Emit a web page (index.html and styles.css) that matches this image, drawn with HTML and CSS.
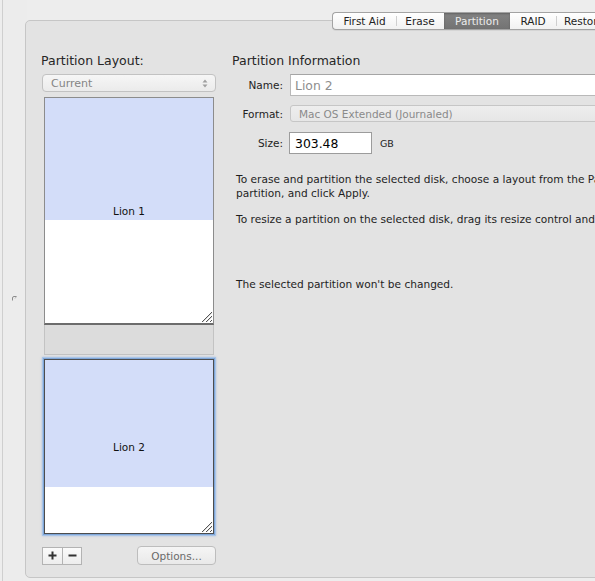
FILE: index.html
```html
<!DOCTYPE html>
<html>
<head>
<meta charset="utf-8">
<title>Disk Utility – Partition</title>
<link rel="stylesheet" href="styles.css">
</head>
<body>
<div class="window">
  <div class="edge">
    <svg class="collapse" width="5" height="5" viewBox="0 0 5 5"><path d="M0.5 4.5 L0.5 2 Q0.5 0.5 2 0.5 L4.5 0.5" fill="none" stroke="#8c8c8c" stroke-width="1"/><path d="M3 2.5 L4.5 0.5" stroke="#aaa" stroke-width="0.8"/></svg>
  </div>
  <div class="panel">
    <div class="tabs">
      <span class="tab t-first">First Aid</span><span class="tab t-erase">Erase</span><span class="tab t-part sel">Partition</span><span class="tab t-raid">RAID</span><span class="tab t-rest">Restore</span>
    </div>

    <div class="layout-col">
      <div class="heading">Partition Layout:</div>
      <div class="popup">
        <span>Current</span>
        <svg width="6" height="9" viewBox="0 0 6 9"><path d="M3 0.5 L5.5 3.5 L0.5 3.5 Z M3 8.5 L5.5 5.5 L0.5 5.5 Z" fill="#a0a0a0"/></svg>
      </div>
      <div class="parts">
        <div class="part p1">
          <div class="used" style="height:122px"></div>
          <span class="plabel">Lion 1</span>
          <svg class="grip" width="11" height="11" viewBox="0 0 11 11"><path d="M1 11 L11 1 M5 11 L11 5 M9 11 L11 9" stroke="#555" stroke-width="1"/><path d="M2 11 L11 2 M6 11 L11 6" stroke="#ddd" stroke-width="1"/></svg>
        </div>
        <div class="gap"></div>
        <div class="part p2 selected">
          <div class="used" style="height:127px"></div>
          <span class="plabel">Lion 2</span>
          <svg class="grip" width="11" height="11" viewBox="0 0 11 11"><path d="M1 11 L11 1 M5 11 L11 5 M9 11 L11 9" stroke="#555" stroke-width="1"/><path d="M2 11 L11 2 M6 11 L11 6" stroke="#ddd" stroke-width="1"/></svg>
        </div>
      </div>
      <div class="bottom-row">
        <div class="pm">
          <span class="pm-btn"><svg width="9" height="9" viewBox="0 0 9 9"><path d="M4.5 0.5 V8.5 M0.5 4.5 H8.5" stroke="#333" stroke-width="2"/></svg></span><span class="pm-btn"><svg width="9" height="9" viewBox="0 0 9 9"><path d="M0.5 4.5 H8.5" stroke="#333" stroke-width="2"/></svg></span>
        </div>
        <div class="options">Options...</div>
      </div>
    </div>

    <div class="info-col">
      <div class="heading info-heading">Partition Information</div>
      <div class="form">
        <div class="row row-name">
          <span class="lbl">Name:</span>
          <div class="field name-field">Lion 2</div>
        </div>
        <div class="row row-format">
          <span class="lbl">Format:</span>
          <div class="format-popup">Mac OS Extended (Journaled)</div>
        </div>
        <div class="row row-size">
          <span class="lbl">Size:</span>
          <div class="field size-field">303.48</div>
          <span class="unit">GB</span>
        </div>
      </div>
      <div class="desc">
        <p>To erase and partition the selected disk, choose a layout from the Partition Layout pop-up menu, set options for each<br>partition, and click Apply.</p>
        <p>To resize a partition on the selected disk, drag its resize control and click Apply.</p>
        <p class="status">The selected partition won't be changed.</p>
      </div>
    </div>
  </div>
</div>
</body>
</html>
```

FILE: styles.css
```css
* { box-sizing: border-box; }
html, body { margin: 0; padding: 0; }
body {
  background: #ededed;
  font-family: "DejaVu Sans", "Liberation Sans", sans-serif;
  color: #1a1a1a;
}
.window {
  width: 595px;
  height: 581px;
  overflow: hidden;
  display: flex;
  background: #ededed;
}
.edge {
  flex: 0 0 25px;
  height: 581px;
  margin-left: 2px;
  border-left: 1px solid #cfcfcf;
  background: #ececec;
  padding-top: 296px;
  padding-left: 9px;
}
.collapse { display: block; }

.panel {
  position: relative;
  flex: 0 0 auto;
  width: 640px;
  height: 558px;
  margin-top: 20px;
  margin-left: -2px;
  background: #e3e3e3;
  border: 1px solid #c6c6c6;
  border-radius: 5px;
  padding: 31px 0 0 15px;
  display: flex;
}

/* tab strip overlaps the panel's top border */
.tabs {
  position: absolute;
  top: -9px;
  left: 306px;
  display: flex;
  height: 18px;
  border: 1px solid #a3a3a3;
  border-right: none;
  border-radius: 4px 0 0 4px;
  background: linear-gradient(#ffffff, #f1f1f1);
  overflow: hidden;
  box-shadow: 0 1px 0 rgba(0,0,0,0.06);
}
.tab {
  display: flex;
  align-items: center;
  justify-content: center;
  font-size: 10.5px;
  color: #222;
  position: relative;
  height: 16px;
}
.tab + .tab::before {
  content: "";
  position: absolute;
  left: 0;
  top: 3px;
  height: 10px;
  width: 1px;
  background: #cfcfcf;
}
.tab.sel + .tab::before, .tab.sel::before { display: none; }
.t-first { width: 63px; }
.t-erase { width: 48px; }
.t-part { width: 66px; }
.t-raid { width: 46px; }
.t-rest { width: 60px; justify-content: flex-start; padding-left: 8px; }
.tab.sel {
  background: linear-gradient(#838383, #737373);
  color: #ececec;
  box-shadow: inset 0 1px 2px rgba(0,0,0,0.25);
}

.heading {
  font-size: 12.5px;
  line-height: 16px;
  height: 16px;
  margin-top: 1px;
  color: #262626;
}

.layout-col {
  flex: 0 0 175px;
  display: flex;
  flex-direction: column;
}
.popup {
  margin: 5px 0 0 1px;
  width: 174px;
  height: 18px;
  border: 1px solid #c2c2c2;
  border-radius: 4px;
  background: linear-gradient(#f6f6f6, #ebebeb);
  display: flex;
  align-items: center;
  justify-content: space-between;
  padding: 0 7px 0 8px;
  font-size: 11px;
  color: #858585;
}
.popup svg { display: block; }

.parts {
  margin: 5px 0 0 3px;
  width: 170px;
  display: flex;
  flex-direction: column;
}
.part {
  display: grid;
  background: #ffffff;
}
.part > * { grid-area: 1 / 1; }
.p1 {
  height: 228px;
  border: 1px solid #8c8c8c;
  border-bottom: 2px solid #6c6c6c;
}
.p2 {
  height: 175px;
  margin-top: 4px;
  border: 1px solid #4d4d4d;
  box-shadow: 0 0 0 1px #7fa6d8, 0 0 0 2px #a9c5e8, 0 0 2px 2px rgba(120,160,215,0.5);
}
.used {
  align-self: start;
  background: #d3ddf9;
}
.plabel {
  align-self: center;
  justify-self: center;
  font-size: 10.5px;
  color: #111;
}
.grip {
  align-self: end;
  justify-self: end;
  margin: 0 1px 1px 0;
}
.gap {
  height: 30px;
  background: #dcdcdc;
  border: 1px solid #c3c3c3;
  border-top: none;
}

.bottom-row {
  margin-top: 12px;
  display: flex;
  justify-content: space-between;
  align-items: center;
}
.pm {
  margin-left: 1px;
  display: flex;
  height: 18px;
  border: 1px solid #b3b3b3;
  background: linear-gradient(#fbfbfb, #ededed);
}
.pm-btn {
  width: 19px;
  display: flex;
  align-items: center;
  justify-content: center;
}
.pm-btn + .pm-btn { border-left: 1px solid #b3b3b3; }
.options {
  width: 79px;
  height: 19px;
  border: 1px solid #bdbdbd;
  border-radius: 4px;
  background: linear-gradient(#f5f5f5, #e9e9e9);
  display: flex;
  align-items: center;
  justify-content: center;
  font-size: 10.5px;
  color: #6a6a6a;
}

.info-col {
  margin-left: 16px;
  flex: 0 0 auto;
  display: flex;
  flex-direction: column;
}
.form { display: flex; flex-direction: column; }
.row {
  display: flex;
  align-items: center;
}
.lbl {
  width: 51px;
  text-align: right;
  font-size: 10.5px;
  color: #222;
  margin-right: 7px;
}
.row-name { margin-top: 5px; height: 22px; }
.field {
  background: #fff;
  border: 1px solid #b9b9b9;
  border-top-color: #a5a5a5;
  height: 22px;
  display: flex;
  align-items: center;
  font-size: 12.4px;
}
.name-field {
  width: 330px;
  padding-left: 4px;
  color: #8e8e8e;
}
.row-format { margin-top: 9px; height: 17px; }
.format-popup {
  width: 330px;
  height: 17px;
  border: 1px solid #c6c6c6;
  border-radius: 3px;
  background: linear-gradient(#eeeeee, #e6e6e6);
  font-size: 10.5px;
  color: #8a8a8a;
  display: flex;
  align-items: center;
  padding-left: 8px;
}
.row-size { margin-top: 10px; height: 22px; }
.size-field {
  width: 83px;
  margin-left: -1px;
  padding-left: 5px;
  color: #000;
  border-color: #9c9c9c;
}
.unit {
  margin-left: 8px;
  font-size: 9.5px;
  color: #222;
}

.desc {
  margin: 18px 0 0 4px;
  font-size: 10.6px;
  line-height: 14px;
  color: #1e1e1e;
  white-space: nowrap;
}
.desc p { margin: 0 0 13px 0; }
.desc p + p { margin-top: -1px; }
.desc p.status { margin-top: 51px; }
```
